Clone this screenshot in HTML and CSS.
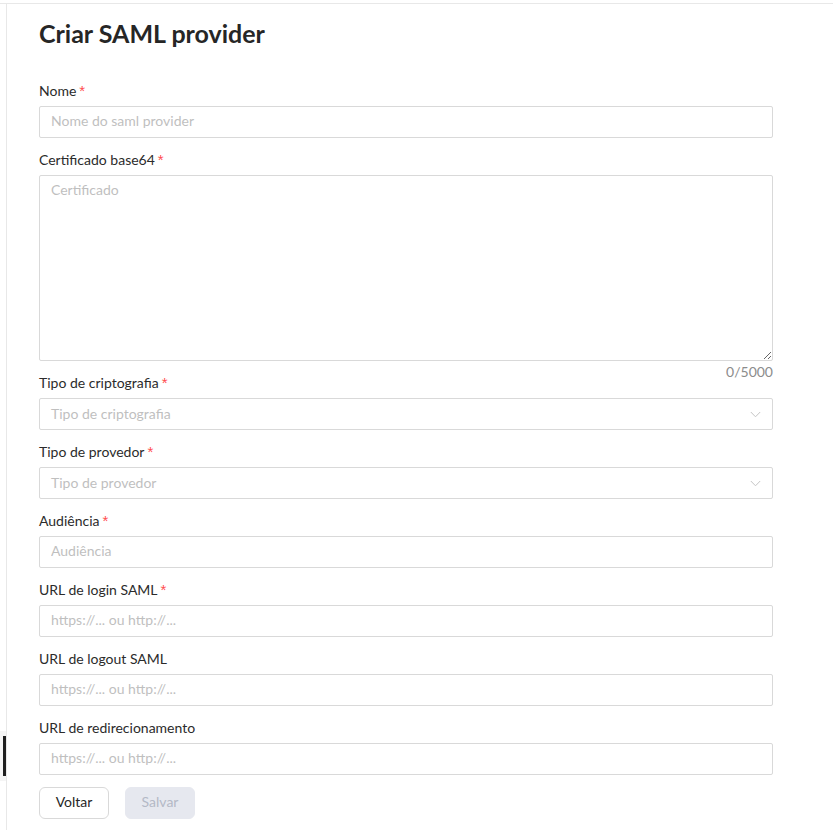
FILE: index.html
```html
<!DOCTYPE html>
<html lang="pt">
<head>
<meta charset="utf-8">
<title>Criar SAML provider</title>
<link rel="stylesheet" href="styles.css">
</head>
<body>
<div class="topline"></div>
<div class="layout">
  <aside class="sidebar">
    <div class="side-item"><span class="side-bar"></span></div>
  </aside>
  <main class="main">
    <h1 class="title">Criar SAML provider</h1>
    <form class="form">
      <div class="field">
        <label class="label">Nome<span class="req">*</span></label>
        <input class="input" type="text" placeholder="Nome do saml provider">
      </div>
      <div class="field">
        <label class="label">Certificado base64<span class="req">*</span></label>
        <div class="textarea-wrap">
          <textarea class="textarea" placeholder="Certificado"></textarea>
          <span class="count">0/5000</span>
        </div>
      </div>
      <div class="field">
        <label class="label">Tipo de criptografia<span class="req">*</span></label>
        <div class="select">
          <span class="select-ph">Tipo de criptografia</span>
          <svg class="chev" width="11" height="7" viewBox="0 0 11 7"><path d="M0.8 1 L5.5 5.8 L10.2 1" fill="none" stroke="#c4c4c4" stroke-width="1"/></svg>
        </div>
      </div>
      <div class="field">
        <label class="label">Tipo de provedor<span class="req">*</span></label>
        <div class="select">
          <span class="select-ph">Tipo de provedor</span>
          <svg class="chev" width="11" height="7" viewBox="0 0 11 7"><path d="M0.8 1 L5.5 5.8 L10.2 1" fill="none" stroke="#c4c4c4" stroke-width="1"/></svg>
        </div>
      </div>
      <div class="field">
        <label class="label">Audiência<span class="req">*</span></label>
        <input class="input" type="text" placeholder="Audiência">
      </div>
      <div class="field">
        <label class="label">URL de login SAML<span class="req">*</span></label>
        <input class="input" type="text" placeholder="https://... ou http://...">
      </div>
      <div class="field">
        <label class="label">URL de logout SAML</label>
        <input class="input" type="text" placeholder="https://... ou http://...">
      </div>
      <div class="field last">
        <label class="label">URL de redirecionamento</label>
        <input class="input" type="text" placeholder="https://... ou http://...">
      </div>
      <div class="actions">
        <button type="button" class="btn">Voltar</button>
        <button type="button" class="btn btn-disabled" disabled>Salvar</button>
      </div>
    </form>
  </main>
</div>
</body>
</html>
```
FILE: styles.css
```css
* { box-sizing: border-box; }
html, body { margin: 0; padding: 0; background: #fff; }
body {
  font-family: Lato, "Noto Sans", sans-serif;
  color: #262626;
  font-size: 14px;
  overflow: hidden;
  height: 830px;
}
.topline {
  height: 4px;
  border-bottom: 1px solid #e8e8e8;
}
.layout {
  display: flex;
  height: 826px;
}
.sidebar {
  width: 7px;
  border-right: 1px solid #e8e8e8;
  padding-top: 727px;
}
.side-item {
  height: 50px;
  background: #f5f5f5;
  padding-top: 5px;
  padding-left: 3px;
}
.side-bar {
  display: block;
  width: 3px;
  height: 40px;
  background: #1f1f1f;
}
.main {
  flex: 1;
  padding: 13px 0 0 32px;
}
.title {
  margin: 0;
  font-size: 25px;
  line-height: 32px;
  font-weight: 700;
  color: #262626;
}
.form {
  width: 734px;
  margin-top: 31px;
}
.field {
  display: flex;
  flex-direction: column;
  gap: 4px;
  margin-bottom: 11px;
}
.field.last { margin-bottom: 12px; }
.label {
  line-height: 22px;
  font-size: 14px;
  color: #2b2b2b;
}
.req {
  color: #ff4d4f;
  margin-left: 3px;
  font-family: "Liberation Sans", sans-serif;
  font-size: 15px;
}
.input, .textarea, .select {
  width: 100%;
  border: 1px solid #d9d9d9;
  border-radius: 2px;
  font-family: inherit;
  font-size: 14px;
  color: #262626;
  background: #fff;
  outline: none;
}
.input {
  height: 32px;
  padding: 0 11px 3px;
}
.input::placeholder, .textarea::placeholder { color: #bfbfbf; opacity: 1; }
.textarea-wrap { position: relative; }
.textarea {
  display: block;
  height: 186px;
  padding: 3px 11px;
  line-height: 22px;
  resize: vertical;
}
.count {
  position: absolute;
  right: 0;
  top: 100%;
  line-height: 22px;
  color: #8c8c8c;
}
.select {
  height: 32px;
  padding: 0 11px 2px;
  display: flex;
  align-items: center;
  justify-content: space-between;
}
.select-ph { color: #bfbfbf; }
.chev { display: block; margin-top: 2px; }
.actions {
  display: flex;
  gap: 16px;
}
.btn {
  width: 70px;
  height: 32px;
  border: 1px solid #d9d9d9;
  border-radius: 6px;
  background: #fff;
  font-family: inherit;
  font-size: 14px;
  color: #262626;
  padding: 0 0 3px;
}
.btn-disabled {
  background: #e6e8ef;
  border-color: #e6e8ef;
  color: #b4b9c6;
}
```
